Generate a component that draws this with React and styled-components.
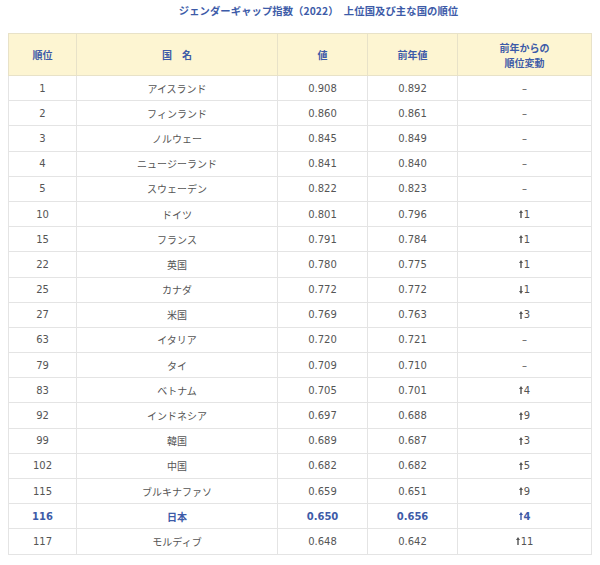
import React from "react";
import styled, { createGlobalStyle } from "styled-components";

const Global = createGlobalStyle`
  html, body { margin: 0; padding: 0; background: #fff; }
  body { font-family: "DejaVu Sans", "Noto Sans CJK JP", sans-serif; }
`;

const Page = styled.div`
  width: 600px;
  height: 565px;
  padding: 0 9px 0 8px;
  box-sizing: border-box;
`;

const Title = styled.div`
  padding: 4px 0 0 38px;
  height: 33px;
  box-sizing: border-box;
  text-align: center;
  font-family: "Noto Sans CJK JP", sans-serif;
  font-weight: 700;
  font-size: 10.3px;
  line-height: 14px;
  color: #3d5ba8;
  letter-spacing: 0.1px;
`;

const Table = styled.table`
  width: 583px;
  border-collapse: collapse;
  table-layout: fixed;
  border: 1px solid #e4e4e4;
`;

const Th = styled.th`
  background: #fdf5d2;
  color: #3d5ba8;
  font-family: "Noto Sans CJK JP", sans-serif;
  font-weight: 700;
  font-size: 10px;
  line-height: 15px;
  height: 41px;
  padding: 0;
  border: 1px solid #e8e2c8;
  text-align: center;
  vertical-align: middle;
`;

const Td = styled.td`
  height: 24.2px;
  padding: 0;
  border: 1px solid #e4e4e4;
  text-align: center;
  vertical-align: middle;
  font-size: 10px;
  color: ${(p) => (p.$hl ? "#3d5ba8" : "#555")};
  font-weight: ${(p) => (p.$hl ? 700 : 400)};
  font-family: ${(p) =>
    p.$jp ? `"Noto Sans CJK JP", sans-serif` : `"DejaVu Sans", "Noto Sans CJK JP", sans-serif`};
`;

const ArrowSvg = styled.svg`
  width: 4px;
  height: 8px;
  margin-right: 1px;
  vertical-align: -0.5px;
`;

function Arrow({ down }) {
  return (
    <ArrowSvg viewBox="0 0 4 8" aria-hidden="true">
      <g transform={down ? "rotate(180 2 4)" : undefined} fill="currentColor">
        <path d="M2 0 L4 3 L2.7 3 L2.7 8 L1.3 8 L1.3 3 L0 3 Z" />
      </g>
    </ArrowSvg>
  );
}

const rows = [
  [1, "アイスランド", "0.908", "0.892", null],
  [2, "フィンランド", "0.860", "0.861", null],
  [3, "ノルウェー", "0.845", "0.849", null],
  [4, "ニュージーランド", "0.841", "0.840", null],
  [5, "スウェーデン", "0.822", "0.823", null],
  [10, "ドイツ", "0.801", "0.796", ["up", 1]],
  [15, "フランス", "0.791", "0.784", ["up", 1]],
  [22, "英国", "0.780", "0.775", ["up", 1]],
  [25, "カナダ", "0.772", "0.772", ["down", 1]],
  [27, "米国", "0.769", "0.763", ["up", 3]],
  [63, "イタリア", "0.720", "0.721", null],
  [79, "タイ", "0.709", "0.710", null],
  [83, "ベトナム", "0.705", "0.701", ["up", 4]],
  [92, "インドネシア", "0.697", "0.688", ["up", 9]],
  [99, "韓国", "0.689", "0.687", ["up", 3]],
  [102, "中国", "0.682", "0.682", ["up", 5]],
  [115, "ブルキナファソ", "0.659", "0.651", ["up", 9]],
  [116, "日本", "0.650", "0.656", ["up", 4], true],
  [117, "モルディブ", "0.648", "0.642", ["up", 11]],
];

export default function App() {
  return (
    <>
      <Global />
      <Page>
        <Title>ジェンダーギャップ指数（2022）　上位国及び主な国の順位</Title>
        <Table>
          <colgroup>
            <col style={{ width: 68 }} />
            <col style={{ width: 201 }} />
            <col style={{ width: 90 }} />
            <col style={{ width: 90 }} />
            <col style={{ width: 134 }} />
          </colgroup>
          <thead>
            <tr>
              <Th>順位</Th>
              <Th>国　名</Th>
              <Th>値</Th>
              <Th>前年値</Th>
              <Th>
                前年からの
                <br />
                順位変動
              </Th>
            </tr>
          </thead>
          <tbody>
            {rows.map(([rank, name, v, pv, ch, hl]) => (
              <tr key={rank}>
                <Td $hl={hl}>{rank}</Td>
                <Td $jp $hl={hl}>{name}</Td>
                <Td $hl={hl}>{v}</Td>
                <Td $hl={hl}>{pv}</Td>
                <Td $hl={hl}>
                  {ch ? (
                    <>
                      <Arrow down={ch[0] === "down"} />
                      {ch[1]}
                    </>
                  ) : (
                    "–"
                  )}
                </Td>
              </tr>
            ))}
          </tbody>
        </Table>
      </Page>
    </>
  );
}
